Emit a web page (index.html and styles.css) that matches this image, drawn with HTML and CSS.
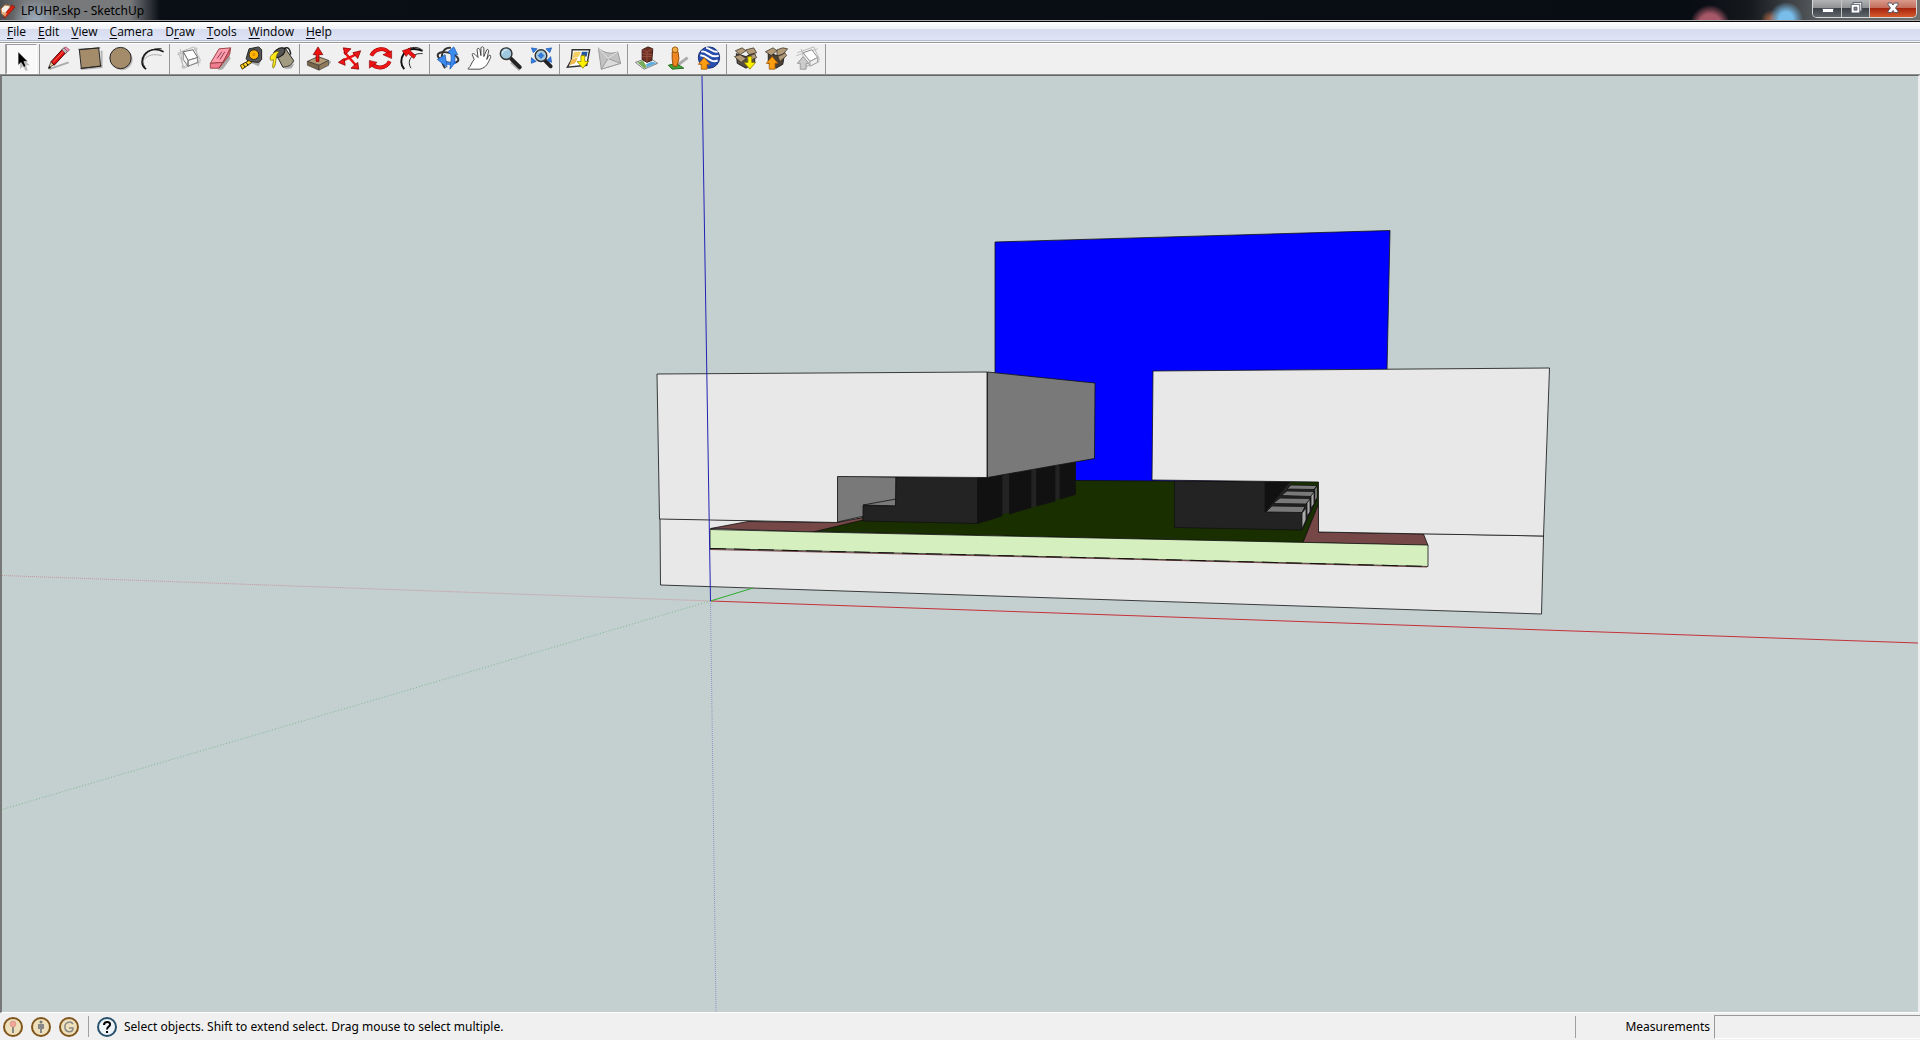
FILE: index.html
```html
<!DOCTYPE html>
<html lang="en">
<head>
<meta charset="utf-8">
<title>LPUHP.skp - SketchUp</title>
<link rel="stylesheet" href="styles.css">
</head>
<body>
<header class="titlebar">
  <svg class="app-icon" viewBox="0 0 16 16" aria-hidden="true"><path d="M1 6 5 2l5 1 1 5-5 6-4-3z" fill="#f4eee6" stroke="#c9803f"/><path d="M4 12 12 2l3 2-8 9-3 2z" fill="#d82314" stroke="#7c160c" stroke-width=".7"/><path d="m2 9 5 1-2 4z" fill="#e7a36a"/></svg>
  <h1 class="title">LPUHP.skp - SketchUp</h1>
  <div class="window-controls">
    <button class="win-btn" aria-label="Minimize"><svg viewBox="0 0 28 17"><path d="M9.500 8.500h11v4h-11z" fill="#fff" stroke="#555a68"/></svg></button>
    <button class="win-btn" aria-label="Restore"><svg viewBox="0 0 28 17"><path d="M11.500 2.500h9v9h-9z" fill="#fff" stroke="#555a68"/><path d="M9.500 4.500h9v9h-9z" fill="#fff" stroke="#555a68"/><path d="M12.500 7.500h3v3h-3z" fill="#889" stroke="#555a68"/></svg></button>
    <button class="win-btn win-close" aria-label="Close"><svg viewBox="0 0 46 17"><path d="m18 3 3.500 0 1.500 2 1.500-2H28v1.500L25.500 8l2.500 3v1.500h-3.500L23 10.500l-1.500 2H18V11l2.500-3L18 4.500z" fill="#fff" stroke="#555a68"/></svg></button>
  </div>
</header>
<nav class="menubar">
  <button class="menu"><u>F</u>ile</button>
  <button class="menu"><u>E</u>dit</button>
  <button class="menu"><u>V</u>iew</button>
  <button class="menu"><u>C</u>amera</button>
  <button class="menu">D<u>r</u>aw</button>
  <button class="menu"><u>T</u>ools</button>
  <button class="menu"><u>W</u>indow</button>
  <button class="menu"><u>H</u>elp</button>
</nav>
<div class="toolbar" role="toolbar" aria-label="Getting Started">
  <div class="group">
    <button class="tool active" aria-label="Select"><svg viewBox="0 0 31 31"><path d="m14 12 0 14 3-3 3 5 2-1-2-5h4z" fill="#bbb"/><path d="M12 8v14l3-3 3 5 2-1-2-5h4z" stroke="#fff" stroke-width=".5"/></svg></button>
  </div>
  <div class="group">
    <button class="tool" aria-label="Line"><svg viewBox="0 0 31 31"><path d="m6 26 20-7" stroke="#aaa" stroke-width="2"/><path d="m5 25 3-7 3 3z" fill="#e7c48c" stroke="#333" stroke-width=".8"/><path d="M8 18 20 5l4 3-13 14z" fill="#e01010" stroke="#400"/><path d="M10 19 21 7" stroke="#ff6a5a"/><path d="m19 6 2-2 4 3-2 3z" fill="#bbb" stroke="#444" stroke-width=".6"/><path d="m21 4 2-1 4 3-2 2z" fill="#f08cb0" stroke="#734" stroke-width=".6"/><path d="m5 26 1-3 2 1z"/></svg></button>
    <button class="tool" aria-label="Rectangle"><svg viewBox="0 0 31 31"><path d="m7 26 21-2V7" stroke="#b4b4b4" fill="none" stroke-width="2"/><path d="m5 6 20-2 2 19-20 2z" fill="#a48c6b" stroke="#222"/><path d="M4 5.500 26.500 4M6 25.500 28 22.500" stroke="#222" stroke-width=".8"/></svg></button>
    <button class="tool" aria-label="Circle"><svg viewBox="0 0 31 31"><circle cx="17" cy="16" r="11" fill="#b8b8b8"/><circle cx="15.500" cy="14.500" r="11" fill="#a48c6b" stroke="#222"/></svg></button>
    <button class="tool" aria-label="Arc"><svg viewBox="0 0 31 31" fill="none"><path d="M8 16c4-5 10-6 18-4" stroke="#aaa"/><path d="M10 26C-1 19 10-1 28 8" stroke="#111" stroke-width="1.500"/><path d="M9 24C2 17 11 3 26 5" stroke="#222"/></svg></button>
  </div>
  <div class="group">
    <button class="tool" aria-label="Make Component"><svg viewBox="0 0 31 31"><path d="m5 9 16-6 7 14-17 8z" fill="none" stroke="#bbb"/><path d="m7 5 3 21M4 11l21-6M8 24l20-5M23 3l3 20" stroke="#bbb"/><path d="m10 8 10-2 5 8-10 3z" fill="#fff" stroke="#666"/><path d="m10 8 5 9v6l-5-7zM15 17l10-3v5l-10 4z" fill="#f6f6f6" stroke="#777"/></svg></button>
    <button class="tool" aria-label="Eraser"><svg viewBox="0 0 31 31"><path d="m14 27 5-1 8-11-2-4z" fill="#aaa"/><path d="M15 5 27 4l-8 15-13 1z" fill="#ff9cae" stroke="#944"/><path d="m6 20 13-1-4 6-9 0z" fill="#f07c92" stroke="#944"/><path d="m27 4-1 7-11 14 4-6z" fill="#d8647c" stroke="#944"/><path d="m13 15 5-7m-2 8 5-8" stroke="#843c50"/></svg></button>
    <button class="tool" aria-label="Tape Measure"><svg viewBox="0 0 31 31"><path d="m15 19 9 4 3-7z" fill="#aaa"/><path d="m14 5 10-2 3 3v10l-3 3-11-1-2-3z" fill="#555" stroke="#222"/><circle cx="19" cy="11" r="5" fill="#ffb400" stroke="#222"/><circle cx="19" cy="11" r="1.500" fill="#d89000"/><path d="m5 22 9-5 3 2-10 7z" fill="#ffd21e" stroke="#3c2c00"/><path d="m8 21 2 3m1-5 2 3" stroke="#111"/></svg></button>
    <button class="tool" aria-label="Paint Bucket"><svg viewBox="0 0 31 31"><path d="m18 26 8-1 3-5z" fill="#aaa"/><path d="m9 9 10-5 9 13c-1 5-7 7-11 7z" fill="#a39a82" stroke="#222"/><path d="M17 8c2-6 7-6 8 3" stroke="#222" fill="none" stroke-width="1.500"/><ellipse cx="13" cy="9" rx="7" ry="4" transform="rotate(-35 13 9)" fill="#555" stroke="#111"/><path d="M4 13c3-4 6-6 9-5-2 2-3 4-3 7-1 4 0 7-3 10-2-3 1-6 0-9-2 2-4 1-3-3z" fill="#ffe81c" stroke="#6b6000" stroke-width=".7"/></svg></button>
  </div>
  <div class="group">
    <button class="tool" aria-label="Push/Pull"><svg viewBox="0 0 31 31"><path d="m15 26 13-6v-3z" fill="#aaa"/><path d="m4 18 11-5 11 4-10 5z" fill="#b39a75" stroke="#333" stroke-width=".8"/><path d="m4 18 12 4v5L4 22z" fill="#79664b" stroke="#333" stroke-width=".6"/><path d="m26 17-10 5v5l10-5z" fill="#927b5b" stroke="#333" stroke-width=".6"/><path d="m15 3 5 8h-4v7h-3v-7h-3z" fill="#e11" stroke="#700" stroke-width=".7"/></svg></button>
    <button class="tool" aria-label="Move"><svg viewBox="0 0 31 31"><path d="m10 8 12 14M7 18l17-8" stroke="#e11" stroke-width="2.500"/><path d="m9 4 8 1-6 6zM19 9l8-2-3 8zM4 19l6-4 1 7zM17 25l7-6 1 7z" fill="#f21818" stroke="#800" stroke-width=".8"/></svg></button>
    <button class="tool" aria-label="Rotate"><svg viewBox="0 0 31 31" fill="none"><path d="M6 12c4-8 14-9 19-2M25 18c-4 8-14 8-19 2" stroke="#900" stroke-width="4"/><path d="M6 12c4-8 14-9 19-2M25 18c-4 8-14 8-19 2" stroke="#ee1818" stroke-width="3"/><path d="m18 11 9-4 0 8zM4 25l0-8 8 2z" fill="#e11" stroke="#800" stroke-width=".6"/></svg></button>
    <button class="tool" aria-label="Offset"><svg viewBox="0 0 31 31" fill="none"><path d="M8 26C0 17 8 0 27 7" stroke="#111" stroke-width="2"/><path d="M15 25c-5-8 1-16 12-15" stroke="#222"/><path d="M12 5c5-2 9-2 13 0" stroke="#222"/><path d="m6 7 9-3-1 3 6 5-2 3-6-5-2 3z" fill="#e11" stroke="#700" stroke-width=".6"/></svg></button>
  </div>
  <div class="group">
    <button class="tool" aria-label="Orbit"><svg viewBox="0 0 31 31" fill="none"><ellipse cx="15" cy="14" rx="11" ry="5" transform="rotate(15 15 14)" stroke="#333" stroke-width="2"/><path d="M12 25C5 15 9 3 18 4" stroke="#333" stroke-width="2"/><path d="M9 17c3 4 8 4 14 2" stroke="#337fe4" stroke-width="3"/><path d="m4 16 8-5 2 13zM15 8l6-5 4 8-3 0c1 7-1 11-5 15 0-5 2-9 1-15z" fill="#3c8cf0" stroke="#1953ad" stroke-width=".7"/></svg></button>
    <button class="tool" aria-label="Pan"><svg viewBox="0 0 31 31"><path d="M4 25c3-2 3-6 6-9L8 11c0-2 2-1 3 0l3 3-1-8c0-2 2-2 3 0l1 6V4c1-2 2-1 3 0l0 9 3-7c1-1 2 0 2 1l-2 9 2-4c2-1 2 0 2 2-3 6-4 10-11 12H4z" fill="#fff" stroke="#333" stroke-width=".9"/></svg></button>
    <button class="tool" aria-label="Zoom"><svg viewBox="0 0 31 31"><path d="m17 18 9 8" stroke="#aaa" stroke-width="5"/><path d="m16 15 9 9" stroke="#222" stroke-width="4" stroke-linecap="round"/><circle cx="11" cy="10" r="6" fill="#9fc8df" stroke="#333" stroke-width="1.500"/><path d="M7 10c0-3 3-4 5-4" stroke="#eff8ff" fill="none"/></svg></button>
    <button class="tool" aria-label="Zoom Extents"><svg viewBox="0 0 31 31"><path d="m19 17 6 6" stroke="#222" stroke-width="4" stroke-linecap="round"/><circle cx="15" cy="12" r="6" fill="#a8cce0" stroke="#333" stroke-width="1.500"/><path d="m5 4 6 1-4 4zM26 4l-6 1 4 4zM5 20l0-6 5 4zM26 19l-1-6-4 4zM12 12l3-3 3 3-3 3z" fill="#2e7ee8" stroke="#174da0" stroke-width=".6"/></svg></button>
  </div>
  <div class="group">
    <button class="tool" aria-label="Get Current View"><svg viewBox="0 0 31 31"><path d="M9 6h18l-3 16-20 2 4-7z" fill="#fff" stroke="#333" stroke-width="1.500"/><path d="m11 8 7 0-2 5-7 2z" fill="#f3cf65"/><path d="m19 8 6 0-1 5h-6z" fill="#26569b"/><path d="m8 16 7-2-3 6-6 2z" fill="#f2b94e"/><path d="M18 12h4v6h4l-6 7-6-7h4z" fill="#fff200" stroke="#8f7e00" stroke-width=".8"/></svg></button>
    <button class="tool" aria-label="Toggle Terrain"><svg viewBox="0 0 31 31"><path d="M4 4c5 5 13 7 20 4l3 12-20 6z" fill="#c2c2c2" stroke="#999"/><path d="m7 26 7-11 13 5z" fill="#dcdcdc" stroke="#999"/><path d="m4 4 10 11 10-7" stroke="#e4e4e4" fill="none"/></svg></button>
  </div>
  <div class="group">
    <button class="tool" aria-label="Add New Building"><svg viewBox="0 0 31 31"><path d="m4 19 14-5 9 6-14 6z" fill="#fff" stroke="#777"/><path d="m6 19 6-2 4 7-3 1z" fill="#76ad5b"/><path d="m15 21 6-3 5 2-10 4z" fill="#5faee0"/><path d="m11 6 6-3 5 2-1 12-5 2-5-3z" fill="#713024" stroke="#381812"/><path d="m11 6 5 2 6-3M16 8v11M11 10l10 1M11 13l10 0" stroke="#a5614c" stroke-width=".7" fill="none"/></svg></button>
    <button class="tool" aria-label="Photo Textures"><svg viewBox="0 0 31 31"><path d="m14 23 12-9" stroke="#aaa" stroke-width="3"/><path d="m6 22 8-2 8 5-12 1z" fill="#42a33b" stroke="#236b20"/><path d="m10 8 6 0 1 7-2 8h-4l-1-8z" fill="#ef861f" stroke="#904b09"/><circle cx="13" cy="6" r="3" fill="#f3ae43" stroke="#9b5a0c"/></svg></button>
    <button class="tool" aria-label="Preview Model in Google Earth"><svg viewBox="0 0 31 31"><circle cx="16" cy="14" r="11" fill="#294dad" stroke="#142b72"/><path d="M8 8c5-3 9 8 18 4M7 12c6-2 10 9 18 5M13 4c4 0 7 5 12 4" stroke="#fff" stroke-width="2" fill="none"/><path d="m11 14 6 7h-3v5H8v-5H5z" fill="#ff9d10" stroke="#a05700" stroke-width=".8"/></svg></button>
  </div>
  <div class="group">
    <button class="tool" aria-label="Get Models"><svg viewBox="0 0 31 31"><path d="m6 10 10 3 9-4v10l-9 6-9-5z" fill="#574c3f" stroke="#222"/><path d="m5 7 7-3 4 3-6 4zM16 6l8-2 3 5-8 2zM4 13l6-2 6 4-5 4zM16 14l9-4 2 4-8 4z" fill="#b19b79" stroke="#40362a" stroke-width=".8"/><path d="M18 13h4v6h4l-6 7-6-7h4z" fill="#fff200" stroke="#827200" stroke-width=".8"/></svg></button>
    <button class="tool" aria-label="Share Model"><svg viewBox="0 0 31 31"><path d="m7 9 9 3 8-3-2 12-7 4-8-5z" fill="#4b4034" stroke="#222"/><path d="m4 8 8-4 4 3-6 5zM16 6l6-2 5 1-5 6-6 1zM17 13l7-4 2 3-7 6z" fill="#b19b79" stroke="#40362a" stroke-width=".8"/><path d="m11 13 6 7h-3v6H8v-6H5z" fill="#ff9d10" stroke="#a05700" stroke-width=".8"/></svg></button>
    <button class="tool" aria-label="Share Component"><svg viewBox="0 0 31 31"><path d="m5 9 17-6 6 13-14 8M9 5l5 18M4 12l22-7M12 23l16-5" fill="none" stroke="#bbb"/><path d="m11 9 9-3 6 8-8 4z" fill="#fff" stroke="#888"/><path d="m18 18 8-4v5l-8 4z" fill="#eee" stroke="#999"/><path d="m11 13 6 7h-3v6H8v-6H5z" fill="#ccc" stroke="#999"/></svg></button>
  </div>
</div>
<main class="viewport">
  <svg class="scene" viewBox="2 76 1916 936" preserveAspectRatio="xMidYMid slice" role="img" aria-label="3D model view">
    <g class="edge">
      <path fill="#00f" d="m995 242 395-11.500-3 140v112H995z"/>
      <path fill="#e8e8e8" d="m660 518.500 883.500 17.500-2 78-881-29z"/>
      <path fill="#192f00" d="m813 531.500 50-14 137-37.500 318.500 2v24L1303 543z"/>
      <path fill="#764747" d="m710.500 528.500 37.500-7 89 1 26-5v2.500L813 532z"/>
      <path fill="#764747" d="M1318.500 504 1303 542.500l125 3-4.500-11.500-105-2z"/>
      <path fill="#d5efbe" d="m710 529.500 105 2.500 305 6.500 308 6.500v21.500l-308-8-410-10z"/>
      <path fill="#797979" d="m837.500 476 58.500 1v24l-32 15-26.500 6z"/>
      <path fill="#797979" d="m863 505 33-6v7z"/>
      <path fill="#232323" d="m896 477 81.500 1v45.500L863 521v-15.500l32.500.5z"/>
      <path class="plain" fill="#232323" d="M1000 456h70v40l-12 3-24 8-32 7z"/>
      <path fill="#111" d="m977.500 477 24.500-4v43l-24.500 7.500zM1009.500 471l21.500-5v41.500l-21.500 6.500zM1036.500 465l18.500-4v40l-18.500 5zM1060 459l15.500-3v38.500l-15.500 4.500z"/>
      <path fill="#797979" d="m987.500 372 107.500 11-.5 75.500-107 19z"/>
      <path fill="#232323" d="m1174.500 481 116 1 26 4v14L1302 530l-127.500-2.500z"/>
      <path fill="#111" d="M1265 481h25l-25 31z"/>
      <path d="M1271 481v24M1274 481v20M1279 481v15M1283 481v10"/>
      <path class="plain" fill="#192f00" d="M1291 482h27v4l-28-1z"/>
      <path fill="#797979" d="m1266 512 6-6 33 .5-3 6zM1273 503.500l7-5.500 31 .5-5 5.500zM1281 495.500l6-4.500 28 .5-4 5zM1287 489l4-4 26 .5-3 4z"/>
      <path fill="#aaa" d="m1302 513 4-5v12l-4 9zM1307 503l3-4v13l-3 4zM1311 496l3-4v12l-3 4zM1315 489l2-3v12l-2 3z"/>
      <path fill="#e8e8e8" d="m657 374 330-2v105.500l-149.500-1V522.500L659.500 519z"/>
      <path fill="#e8e8e8" d="m1153 371 396.500-3-6 168-225-4v-50l-166.500-2z"/>
    </g>
    <path d="m710 549.500 410 9.500 307 8" fill="none" stroke="#764747"/>
    <path d="m710 548.500 410 10 308 8" fill="none" stroke="#111" stroke-dasharray="16 8"/>
    <path d="m710.500 601 1207.500 42" stroke="#c43138"/>
    <path d="M710.500 601 2 575.500" stroke="#c8969b" stroke-dasharray="1 1"/>
    <path d="m710.500 601 42.500-13" stroke="#2bae2b"/>
    <path d="M710.500 601 2 809.500" stroke="#7dbb8b" stroke-dasharray="1 2"/>
    <path d="m702 76 8.500 525" stroke="#2222b4"/>
    <path d="m710.500 601 5.500 411" stroke="#8c96c8" stroke-dasharray="1 1"/>
  </svg>
</main>
<footer class="statusbar">
  <button class="status-btn" aria-label="Geo-location"><svg viewBox="0 0 20 20"><circle cx="10" cy="10" r="9" fill="#eee0bb" stroke="#80551c" stroke-width="2"/><path d="M10 10v6" stroke="#888" stroke-width="2"/><circle cx="10" cy="7" r="3" fill="#f3a59a" stroke="#c98b7b" stroke-width=".6"/></svg></button>
  <button class="status-btn" aria-label="Credits"><svg viewBox="0 0 20 20"><circle cx="10" cy="10" r="9" fill="#eee0bb" stroke="#80551c" stroke-width="2"/><circle cx="10" cy="5" r="1.500" fill="#777"/><path d="M7 7h6v5h-2v4H9v-4H7z" fill="#888"/></svg></button>
  <button class="status-btn" aria-label="Sign in"><svg viewBox="0 0 20 20"><circle cx="10" cy="10" r="9" fill="#eee0bb" stroke="#80551c" stroke-width="2"/><path d="M14 7C11 3 5 6 6 11c1 5 8 5 8 0h-4" fill="none" stroke="#888" stroke-width="1.500"/></svg></button>
  <span class="rule"></span>
  <button class="status-btn" aria-label="Help"><svg viewBox="0 0 20 20"><circle cx="10" cy="10" r="9" fill="#edf4f8" stroke="#27506d" stroke-width="2"/><path d="M7 8c0-4 7-4 6 0-1 2-3 2-3 4.500" fill="none" stroke="#000" stroke-width="2"/><path d="M9 14h2v2H9z"/></svg></button>
  <p class="hint">Select objects. Shift to extend select. Drag mouse to select multiple.</p>
  <div class="measure">
    <label for="vcb">Measurements</label>
    <input id="vcb" type="text">
  </div>
</footer>
</body>
</html>
```
FILE: styles.css
```css
* { box-sizing: border-box; }
body {
  margin: 0;
  height: 100vh;
  display: flex;
  flex-direction: column;
  overflow: hidden;
  background: #f0f0f0;
  color: #000;
  font: 12px/16px "Noto Sans", "Open Sans", sans-serif;
}
button { margin: 0; padding: 0; border: 0; background: none; font: inherit; color: inherit; }
svg { display: block; }

.titlebar {
  flex: none;
  display: flex;
  align-items: center;
  height: 22px;
  border-bottom: 1px solid #000;
  box-shadow: inset 0 -1px #a9abad;
  background:
    radial-gradient(circle at 36px 22px, #a9bdd2cc 0, #a9bdd200 24px),
    radial-gradient(circle at calc(100% - 210px) 25px, #a65768 0 11px, #a6576800 20px),
    radial-gradient(circle at calc(100% - 134px) 19px, #79bdea 0 7px, #79bdea00 17px),
    radial-gradient(circle at calc(100% - 149px) 20px, #925940 0 3px, #92594000 10px),
    linear-gradient(90deg, #4c4e51 0, #77797b 24px, #77797b 130px, #0a0e15 160px, #080c13 calc(100% - 230px), #16191d calc(100% - 170px), #5a5e61 calc(100% - 100px), #70716f 100%);
}
.app-icon { width: 16px; height: 16px; }
.title { margin: 0 auto 0 5px; font-size: 12px; font-weight: 400; line-height: 22px; }
.window-controls {
  align-self: flex-start;
  display: flex;
  margin-right: 3px;
  border: 1px solid #d5d7d8;
  border-top: 0;
  border-radius: 0 0 5px 5px;
  overflow: hidden;
}
.win-btn {
  width: 28px;
  height: 17px;
  background: linear-gradient(#b2b3b4 0, #8c8e90 50%, #3c4047 50%, #60666a 100%);
}
.win-btn + .win-btn { border-left: 1px solid #c3c5c6; }
.win-close { width: 47px; background: linear-gradient(#d9998b 0, #c16a57 50%, #a82610 50%, #d65a2c 100%); }

.menubar {
  flex: none;
  display: flex;
  gap: 12px;
  height: 22px;
  padding: 0 7px 2px;
  font-family: "Open Sans", "Noto Sans", sans-serif;
  background: linear-gradient(#fff 0, #eef1f9 7px, #d6dcee 7px, #dfe5f6 18px, #b5bcd0 18px, #b5bcd0 19px, #f3f3f3 19px, #f3f3f3 20px, #9a9a9a 20px, #9a9a9a 21px, #fff 21px);
}
.menu u { text-underline-offset: 2px; }

.toolbar {
  flex: none;
  display: flex;
  height: 31px;
  padding-left: 2px;
  border-bottom: 1px solid #8f8f8f;
  background: #f0f0f0;
}
.toolbar::before { content: ""; width: 3px; border-right: 1px solid #a5a5a5; }
.group { display: flex; padding-right: 2px; margin-right: 3px; border-right: 1px solid #979797; }
.tool { width: 31px; height: 30px; }
.tool svg { width: 31px; height: 30px; }
.active { background: #f9f9f9; border: 1px solid; border-color: #999 #fff #fff #999; }
.active svg { margin: -1px; }

.viewport {
  flex: 1;
  min-height: 0;
  border-style: solid;
  border-width: 1px 2px 1px 2px;
  border-color: #666 #eee #fff #777;
  background: #c4cfd0;
}
.scene { width: 100%; height: 100%; }
.edge path { stroke: #111; stroke-width: 1; stroke-opacity: .8; stroke-linejoin: round; }
.edge .plain { stroke: none; }

.statusbar {
  flex: none;
  display: flex;
  align-items: center;
  gap: 7px;
  height: 27px;
  padding-left: 3px;
  background: #f0f0f0;
}
.status-btn, .status-btn svg { width: 20px; height: 20px; }
.rule { width: 1px; height: 21px; margin: 0 1px 0 2px; background: #a0a0a0; }
.status-btn + .status-btn { margin-left: 1px; }
.hint { margin: 0; }
.measure {
  display: flex;
  align-items: center;
  justify-content: flex-end;
  gap: 4px;
  width: 345px;
  height: 22px;
  margin-left: auto;
  border-left: 1px solid #a0a0a0;
}
.measure input {
  width: 206px;
  height: 24px;
  border: 1px solid;
  border-color: #999 #999 #fff;
  border-right: 0;
  background: #f0f0f0;
  font: inherit;
}
```
